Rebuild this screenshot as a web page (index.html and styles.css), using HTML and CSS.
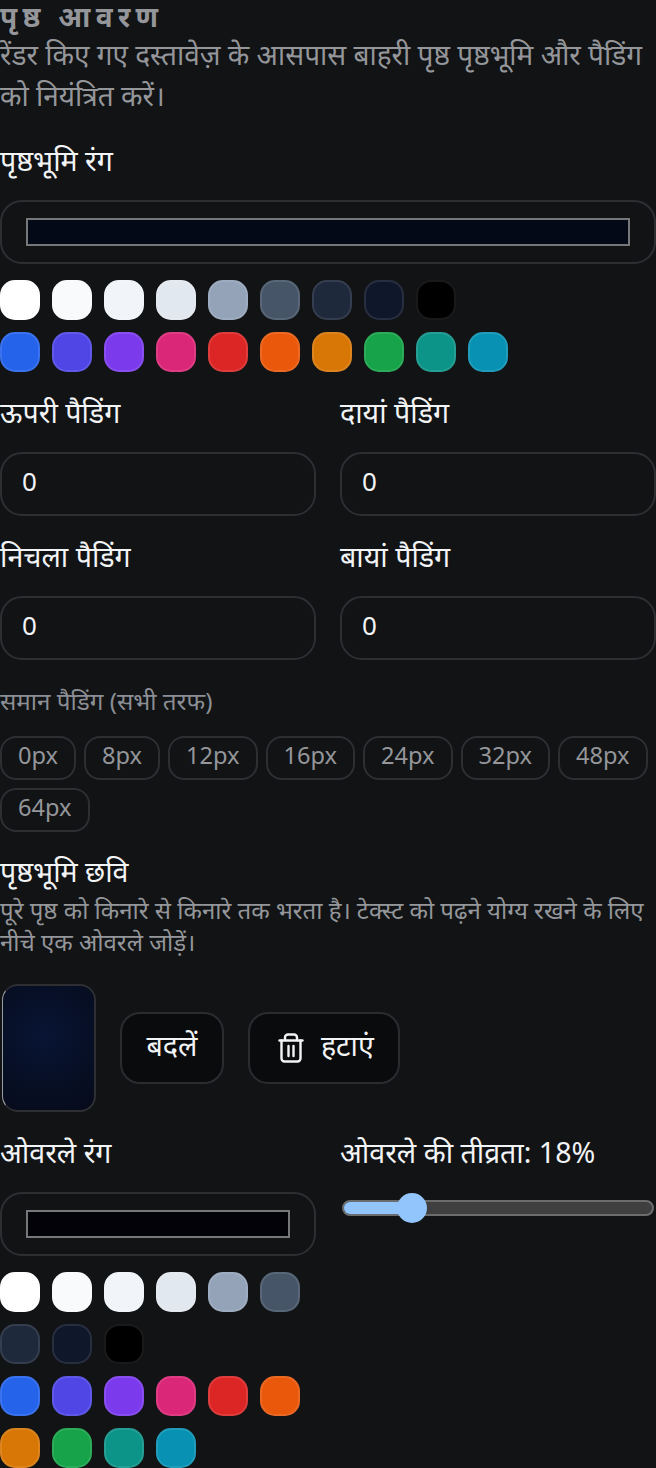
FILE: index.html
```html
<!DOCTYPE html>
<html lang="hi">
<head>
  <meta charset="UTF-8">
  <meta name="viewport" content="width=device-width, initial-scale=1.0">
  <title>पृष्ठ आवरण</title>
  <link rel="stylesheet" href="styles.css">
</head>
<body>
  <section class="panel">
    <h2 class="panel-title">पृष्ठ आवरण</h2>
    <p class="panel-desc">रेंडर किए गए दस्तावेज़ के आसपास बाहरी पृष्ठ पृष्ठभूमि और पैडिंग को नियंत्रित करें।</p>

    <label class="field-label label-bg">पृष्ठभूमि रंग</label>
    <div class="color-box"><span class="color-fill fill-page"></span></div>
    <div class="swatch-set">
      <div class="swatches">
        <span class="swatch s-white"></span><span class="swatch s-50"></span><span class="swatch s-100"></span><span class="swatch s-200"></span><span class="swatch s-400"></span><span class="swatch s-600"></span><span class="swatch s-800"></span><span class="swatch s-900"></span><span class="swatch s-black"></span>
      </div>
      <div class="swatches">
        <span class="swatch s-blue"></span><span class="swatch s-indigo"></span><span class="swatch s-violet"></span><span class="swatch s-pink"></span><span class="swatch s-red"></span><span class="swatch s-orange"></span><span class="swatch s-amber"></span><span class="swatch s-green"></span><span class="swatch s-teal"></span><span class="swatch s-cyan"></span>
      </div>
    </div>

    <div class="two-col padding-grid">
      <div>
        <label class="field-label">ऊपरी पैडिंग</label>
        <div class="num-input">0</div>
      </div>
      <div>
        <label class="field-label">दायां पैडिंग</label>
        <div class="num-input">0</div>
      </div>
      <div>
        <label class="field-label">निचला पैडिंग</label>
        <div class="num-input">0</div>
      </div>
      <div>
        <label class="field-label">बायां पैडिंग</label>
        <div class="num-input">0</div>
      </div>
    </div>

    <div class="hint">समान पैडिंग (सभी तरफ)</div>
    <div class="chips">
      <button class="chip">0px</button>
      <button class="chip">8px</button>
      <button class="chip">12px</button>
      <button class="chip">16px</button>
      <button class="chip">24px</button>
      <button class="chip">32px</button>
      <button class="chip">48px</button>
      <button class="chip">64px</button>
    </div>

    <div class="field-label label-image">पृष्ठभूमि छवि</div>
    <p class="image-desc">पूरे पृष्ठ को किनारे से किनारे तक भरता है। टेक्स्ट को पढ़ने योग्य रखने के लिए नीचे एक ओवरले जोड़ें।</p>

    <div class="image-row">
      <div class="thumb"></div>
      <button class="btn"><span class="btn-text">बदलें</span></button>
      <button class="btn">
        <svg class="btn-icon" viewBox="0 0 26 30" fill="none" stroke="currentColor" stroke-width="2.4" stroke-linecap="round" stroke-linejoin="round">
          <path d="M1.5 7.5h23"/>
          <path d="M7 7V4.5a3 3 0 0 1 3-3h6a3 3 0 0 1 3 3V7"/>
          <path d="M3.5 7.5V25.5a3 3 0 0 0 3 3h13a3 3 0 0 0 3-3V7.5"/>
          <path d="M10.5 13v10"/>
          <path d="M15.5 13v10"/>
        </svg>
        <span class="btn-text">हटाएं</span>
      </button>
    </div>

    <div class="two-col overlay-grid">
      <div>
        <label class="field-label">ओवरले रंग</label>
        <div class="color-box"><span class="color-fill fill-overlay"></span></div>
        <div class="swatch-set">
          <div class="swatches">
            <span class="swatch s-white"></span><span class="swatch s-50"></span><span class="swatch s-100"></span><span class="swatch s-200"></span><span class="swatch s-400"></span><span class="swatch s-600"></span><span class="swatch s-800"></span><span class="swatch s-900"></span><span class="swatch s-black"></span>
          </div>
          <div class="swatches">
            <span class="swatch s-blue"></span><span class="swatch s-indigo"></span><span class="swatch s-violet"></span><span class="swatch s-pink"></span><span class="swatch s-red"></span><span class="swatch s-orange"></span><span class="swatch s-amber"></span><span class="swatch s-green"></span><span class="swatch s-teal"></span><span class="swatch s-cyan"></span>
          </div>
        </div>
      </div>
      <div>
        <label class="field-label">ओवरले की तीव्रता: 18%</label>
        <div class="slider"><span class="slider-fill"></span><span class="slider-thumb"></span></div>
      </div>
    </div>
  </section>
</body>
</html>
```

FILE: styles.css
```css
* { box-sizing: border-box; }
html, body { margin: 0; padding: 0; }
body { background: #111315; color: #f3f4f6; font-family: "Noto Sans", "Noto Sans Devanagari", sans-serif; height: 1468px; overflow: hidden; }
.panel { display: flex; flex-direction: column; }

.panel-title { margin: 0; height: 34px; font-size: 28px; line-height: 32px; font-weight: 700; letter-spacing: 5.3px; color: #94969a; }
.panel-desc { margin: 0; font-size: 28px; line-height: 41px; color: #94969a; }
.field-label { display: block; height: 40px; font-size: 28.6px; line-height: 40px; color: #f3f4f6; margin-bottom: 20px; }
.label-bg { margin-top: 24px; }

.color-box { height: 64px; border: 2px solid #2d2f33; border-radius: 22px; padding: 16px 24px; background: #111315; }
.color-fill { display: block; height: 28px; border: 2px solid #767779; }
.fill-page { background: #040917; }
.fill-overlay { background: #020208; }

.swatch-set { display: flex; flex-direction: column; gap: 12px; margin-top: 16px; }
.swatches { display: flex; flex-wrap: wrap; gap: 12px; }
.swatch { width: 40px; height: 40px; border-radius: 15px; border: 2px solid rgba(255,255,255,0.1); }
.s-white { background: #ffffff; }
.s-50 { background: #f8fafc; }
.s-100 { background: #f1f5f9; }
.s-200 { background: #e2e8f0; }
.s-400 { background: #94a3b8; }
.s-600 { background: #475569; }
.s-800 { background: #1e293b; }
.s-900 { background: #0f172a; }
.s-black { background: #000000; }
.s-blue { background: #2563eb; }
.s-indigo { background: #4f46e5; }
.s-violet { background: #7c3aed; }
.s-pink { background: #db2777; }
.s-red { background: #dc2626; }
.s-orange { background: #ea580c; }
.s-amber { background: #d97706; }
.s-green { background: #16a34a; }
.s-teal { background: #0d9488; }
.s-cyan { background: #0891b2; }

.two-col { display: grid; grid-template-columns: 316px 316px; column-gap: 24px; }
.padding-grid { margin-top: 20px; row-gap: 20px; }
.num-input { height: 64px; border: 2px solid #2d2f33; border-radius: 22px; padding: 0 20px 6px; font-size: 26px; line-height: 54px; color: #f3f4f6; }

.hint { margin-top: 22px; height: 40px; font-size: 24.2px; line-height: 38px; color: #8b8e94; }
.chips { display: flex; flex-wrap: wrap; gap: 8px; margin-top: 14px; }
.chip { height: 44px; padding: 0 16px 6px; border: 2px solid #2d2f33; border-radius: 16px; background: transparent; font-family: inherit; font-size: 23.6px; line-height: 34px; color: #94969a; }

.label-image { margin: 19px 0 3px; }
.image-desc { margin: 0; font-size: 24px; line-height: 32px; color: #94969a; }

.image-row { display: flex; align-items: center; gap: 24px; margin-top: 26px; }
.thumb { width: 94px; height: 128px; margin-left: 2px; border: 2px solid #2d2f33; border-left: 1px solid #9a9da0; border-radius: 16px; background: radial-gradient(circle at 45% 40%, #081433, #060b1a); }
.btn { display: flex; align-items: center; gap: 17px; height: 72px; padding: 0 24.5px; background: #0a0b0d; border: 2px solid #2a2c30; border-radius: 20px; font-family: inherit; font-size: 28.6px; color: #f3f4f6; }
.btn-text { padding-bottom: 8px; }
.btn-icon { width: 26px; height: 30px; margin-left: 3.5px; }

.overlay-grid { margin-top: 20px; }
.slider { position: relative; height: 16px; margin: 28px 2px 0; background: #3f3f3f; border: 2px solid #6b6c6e; border-radius: 8px; }
.slider-fill { display: block; width: 56px; height: 100%; background: #93c5fd; border-radius: 6px 0 0 6px; }
.slider-thumb { position: absolute; left: 53px; top: -9px; width: 30px; height: 30px; border-radius: 50%; background: #93c5fd; }
```
